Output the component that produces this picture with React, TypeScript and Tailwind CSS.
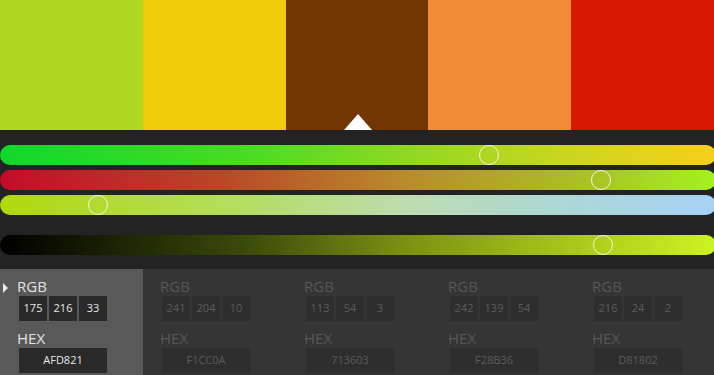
type Swatch = { hex: string; rgb: [number, number, number] }

const swatches: Swatch[] = [
  { hex: 'AFD821', rgb: [175, 216, 33] },
  { hex: 'F1CC0A', rgb: [241, 204, 10] },
  { hex: '713603', rgb: [113, 54, 3] },
  { hex: 'F28B36', rgb: [242, 139, 54] },
  { hex: 'D81802', rgb: [216, 24, 2] },
]

const swatchBg = [
  'bg-[#afd821]',
  'bg-[#f1cc0a]',
  'bg-[#713603]',
  'bg-[#f28b36]',
  'bg-[#d81802]',
]

// gradient tracks + handle position (px from left)
const sliders = [
  {
    track: 'bg-[linear-gradient(90deg,#10d82c_0%,#48dc22_34%,#8dd823_56%,#c9d61f_78%,#f8cf1a_100%)]',
    at: 489,
  },
  {
    track: 'bg-[linear-gradient(90deg,#c50c2a_0%,#b94526_30%,#b98a2c_56%,#a8c624_84%,#a4f31e_100%)]',
    at: 601,
  },
  {
    track: 'bg-[linear-gradient(90deg,#b0d90c_0%,#b4dd62_34%,#bcdcae_56%,#acd7d8_80%,#a6d2f7_100%)]',
    at: 98,
  },
]

const valueSlider = {
  track: 'bg-[linear-gradient(90deg,#000000_0%,#3a4a0a_34%,#7a8f12_56%,#a8c81a_80%,#ccf422_100%)]',
  at: 603,
}

function Slider({ track, at }: { track: string; at: number }) {
  return (
    <div className={`relative h-5 rounded-full ${track}`}>
      <span
        className="absolute top-0 h-5 w-5 -translate-x-1/2 rounded-full border-[1.5px] border-[#f4f4e4]"
        style={{ left: at }}
      />
    </div>
  )
}

function Column({ sw, active }: { sw: Swatch; active: boolean }) {
  const label = active ? 'text-[#e2e2e2]' : 'text-[#575757]'
  const box = active ? 'bg-[#2a2a2a] text-[#e6e6e6]' : 'bg-[#2e2e2e] text-[#5c5c5c]'
  return (
    <div className={`relative pl-[17px] pt-2 ${active ? 'bg-[#595959]' : 'bg-[#353535]'}`}>
      {active && (
        <span className="absolute left-[3px] top-[14px] h-0 w-0 border-y-[5px] border-l-[5px] border-y-transparent border-l-[#e8e8e8]" />
      )}
      <p className={`text-[15px] leading-[19px] ${label}`}>RGB</p>
      <div className="ml-[2px] flex gap-[2px]">
        {sw.rgb.map((v, i) => (
          <span
            key={i}
            className={`flex h-[25px] w-[28px] items-center justify-center text-[11px] ${box}`}
          >
            {v}
          </span>
        ))}
      </div>
      <p className={`mt-2 text-[15px] leading-[19px] ${label}`}>HEX</p>
      <span
        className={`ml-[2px] flex h-[25px] w-[88px] items-center justify-center text-[11px] ${box}`}
      >
        {sw.hex}
      </span>
    </div>
  )
}

export default function App() {
  return (
    <div className="h-[375px] w-[714px] overflow-hidden bg-[#232323] font-['Open_Sans','Noto_Sans',sans-serif]">
      <div className="relative grid h-[130px] grid-cols-5">
        {swatchBg.map((c) => (
          <div key={c} className={c} />
        ))}
        {/* selected swatch pointer */}
        <span className="absolute bottom-0 left-[344px] h-0 w-0 border-x-[14px] border-b-[16px] border-x-transparent border-b-white" />
      </div>

      <div className="-mr-[2px] flex flex-col gap-[5px] pb-[14px] pt-[15px]">
        {sliders.map((s, i) => (
          <Slider key={i} track={s.track} at={s.at} />
        ))}
        <div className="mt-[15px]">
          <Slider track={valueSlider.track} at={valueSlider.at} />
        </div>
      </div>

      <div className="grid h-[106px] grid-cols-[143px_144px_144px_144px_1fr]">
        {swatches.map((sw, i) => (
          <Column key={sw.hex} sw={sw} active={i === 0} />
        ))}
      </div>
    </div>
  )
}
